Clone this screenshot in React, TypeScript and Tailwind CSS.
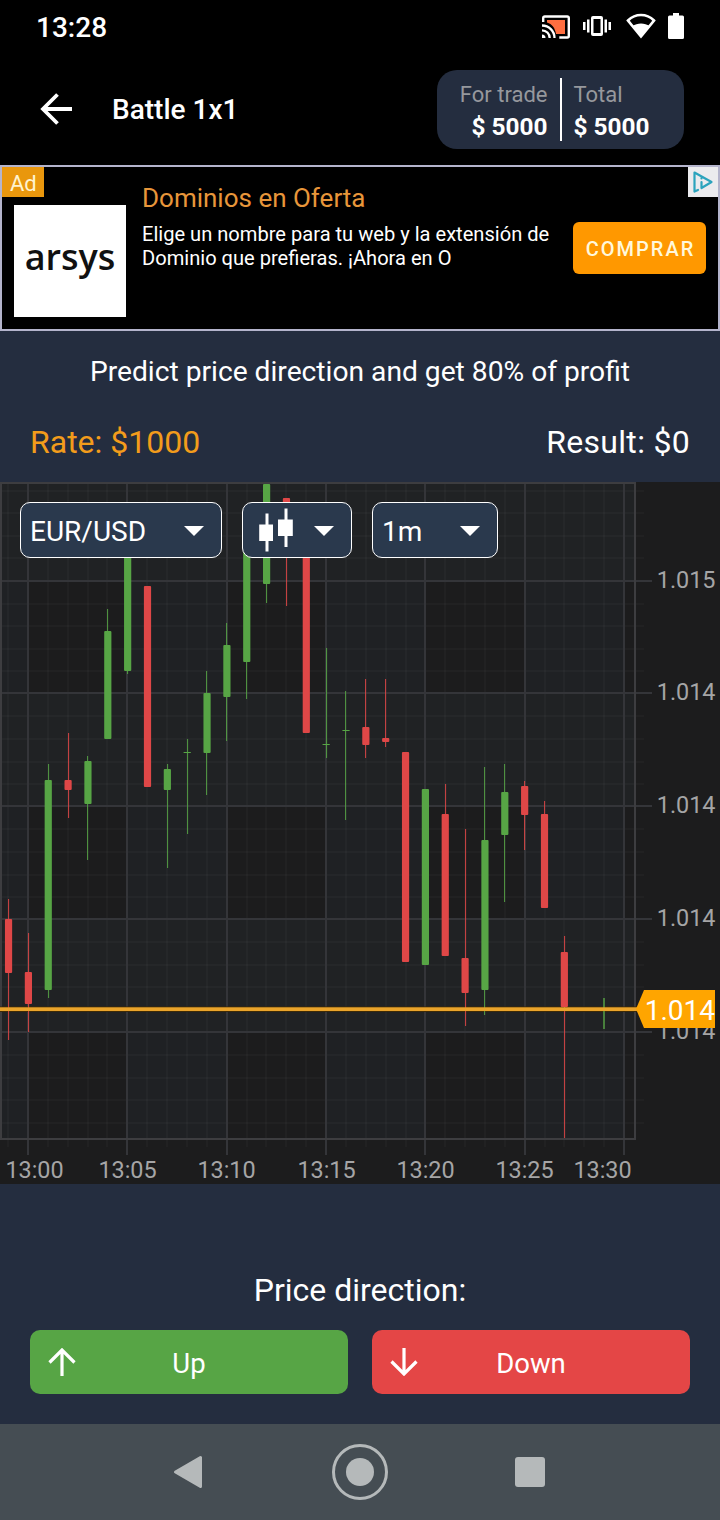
import React from 'react';

interface Candle {
  // minutes since 13:00
  t: number;
  up: boolean;
  high: number;
  top: number;
  bottom: number;
  low: number;
}

const GREEN = '#57a545';
const RED = '#df4747';

const X0 = 28;
const STEP = 19.87;
const PLOT_RIGHT = 635;
const PLOT_BOTTOM = 657;

const CANDLES: Candle[] = [
  { t: -1, up: false, high: 417, top: 437, bottom: 491, low: 558 },
  { t: 0, up: false, high: 451, top: 490, bottom: 522, low: 550 },
  { t: 1, up: true, high: 282, top: 298, bottom: 508, low: 516 },
  { t: 2, up: false, high: 251, top: 298, bottom: 308, low: 336 },
  { t: 3, up: true, high: 274, top: 279, bottom: 322, low: 378 },
  { t: 4, up: true, high: 127, top: 149, bottom: 257, low: 257 },
  { t: 5, up: true, high: 60, top: 60, bottom: 189, low: 192 },
  { t: 6, up: false, high: 104, top: 104, bottom: 305, low: 305 },
  { t: 7, up: true, high: 282, top: 287, bottom: 308, low: 386 },
  { t: 8, up: true, high: 257, top: 270, bottom: 271, low: 352 },
  { t: 9, up: true, high: 189, top: 211, bottom: 271, low: 313 },
  { t: 10, up: true, high: 141, top: 163, bottom: 215, low: 259 },
  { t: 11, up: true, high: 50, top: 50, bottom: 180, low: 217 },
  { t: 12, up: true, high: 2, top: 2, bottom: 102, low: 121 },
  { t: 13, up: false, high: 16, top: 16, bottom: 60, low: 124 },
  { t: 14, up: false, high: 50, top: 50, bottom: 251, low: 251 },
  { t: 15, up: true, high: 166, top: 262, bottom: 263, low: 276 },
  { t: 16, up: true, high: 209, top: 248, bottom: 249, low: 338 },
  { t: 17, up: false, high: 197, top: 245, bottom: 263, low: 276 },
  { t: 18, up: false, high: 197, top: 256, bottom: 260, low: 265 },
  { t: 19, up: false, high: 270, top: 270, bottom: 480, low: 480 },
  { t: 20, up: true, high: 307, top: 307, bottom: 483, low: 483 },
  { t: 21, up: false, high: 302, top: 332, bottom: 474, low: 474 },
  { t: 22, up: false, high: 347, top: 476, bottom: 511, low: 544 },
  { t: 23, up: true, high: 285, top: 358, bottom: 508, low: 533 },
  { t: 24, up: true, high: 282, top: 310, bottom: 353, low: 420 },
  { t: 25, up: false, high: 299, top: 304, bottom: 333, low: 368 },
  { t: 26, up: false, high: 319, top: 332, bottom: 426, low: 426 },
  { t: 27, up: false, high: 454, top: 470, bottom: 525, low: 656 },
];

const TIME_LABELS = [
  { x: 34.5, text: '13:00' },
  { x: 127.5, text: '13:05' },
  { x: 226.5, text: '13:10' },
  { x: 326.5, text: '13:15' },
  { x: 425.5, text: '13:20' },
  { x: 524.5, text: '13:25' },
  { x: 602.5, text: '13:30' },
];

const PRICE_LABELS = [
  { y: 99, text: '1.015' },
  { y: 211, text: '1.014' },
  { y: 324, text: '1.014' },
  { y: 437, text: '1.014' },
  { y: 550, text: '1.014' },
];

const xAt = (t: number) => Math.round(X0 + t * STEP);
const yAt = (n: number) => Math.round(99 + n * 22.58);
const candleX = (t: number) => 28.3 + t * 19.85;

const Grid: React.FC = () => {
  const columns = Array.from({ length: 32 }, (_, i) => i - 1);
  const rows = Array.from({ length: 29 }, (_, i) => i - 4);
  const minorColumns = columns.filter(t => t % 5 !== 0);
  const minorRows = rows.filter(n => n % 5 !== 0);

  return (
    <g>
      <rect width="720" height="702" fill="#1c1c1d" />
      {/* Alternating bands */}
      {[[1, 28], [128, 227], [326, 425], [525, 624]].map(([a, b]) => (
        <rect key={a} x={a} y="1" width={b - a} height="656" fill="#1f2124" />
      ))}
      {[[1, 99], [211, 324], [437, 550]].map(([a, b]) => (
        <rect key={a} x="1" y={a} width="634" height={b - a} fill="#202224" />
      ))}
      {minorColumns.map(t => (
        <rect key={t} x={xAt(t) - 1} y="1" width="2" height="664" fill="#ffffff" fillOpacity="0.025" />
      ))}
      {minorRows.map(n => (
        <rect key={n} x="1" y={yAt(n) - 1} width="643" height="2" fill="#ffffff" fillOpacity="0.025" />
      ))}
      {[0, 5, 10, 15, 20, 25, 30].map(t => (
        <rect key={t} x={xAt(t) - 1} y="1" width="2" height="672" fill="#343539" />
      ))}
      {PRICE_LABELS.map(({ y }) => (
        <rect key={y} x="1" y={y - 1} width="651" height="2" fill="#343539" />
      ))}
      <rect x="1" y="1" width={PLOT_RIGHT - 1} height={PLOT_BOTTOM - 1} fill="none" stroke="#3d3d40" strokeWidth="2" />
    </g>
  );
};

const Chart: React.FC = () => (
  <svg width="720" height="702" viewBox="0 0 720 702" className="block" fontFamily="Roboto, sans-serif">
    <Grid />

    {/* Dark edge of the price line sits below the candles */}
    <rect y="524.5" width="637" height="5.5" fill="#3c2a08" />

    {CANDLES.map(({ t, up, high, top, bottom, low }) => (
      <g key={t} fill={up ? GREEN : RED}>
        <rect x={Math.round(candleX(t) - 0.5)} y={high} width="1.1" height={low - high} fillOpacity="0.85" />
        <rect
          x={candleX(t) - 3.5}
          y={top}
          width="7.2"
          height={bottom - top}
          rx={bottom - top > 3 ? 1 : 0}
        />
      </g>
    ))}
    <rect x="603" y="516" width="2" height="31" fill={GREEN} fillOpacity="0.7" />
    <rect y="525.3" width="637" height="3.7" fill="#eaa42b" />

    <g fill="#a5a5a6" fontSize="23.4" textAnchor="middle">
      {TIME_LABELS.map(({ x, text }) => (
        <text key={text} x={x} y="696">{text}</text>
      ))}
    </g>
    <g fill="#a5a5a6" fontSize="23.4" textAnchor="end">
      {PRICE_LABELS.map(({ y, text }) => (
        <text key={y} x="715.5" y={y + 7.3}>{text}</text>
      ))}
    </g>

    {/* Current price tag */}
    <path d="M636 527 L644 508 H715 V546 H644 Z" fill="#ffa500" />
    <text x="715" y="538" fontSize="28" fill="#fff" textAnchor="end">1.014</text>
  </svg>
);

const Caret: React.FC = () => (
  <svg width="20" height="10" viewBox="0 0 20 10" fill="#fff" className="mt-px">
    <path d="M0 0h20L10 10z" />
  </svg>
);

const CandleIcon: React.FC = () => (
  <svg width="36" height="44" viewBox="0 0 36 44" fill="#fff">
    <path d="M6.500 5.500h3V16.500H14V33H9.500V43.500h-3V33H.2V16.500h6.300z" />
    <path d="M25.500 .5h3V11.500h5.300v16.500H28.500V39h-3V28H19V11.500h6.500z" />
  </svg>
);

const StatusBar: React.FC = () => (
  <div className="flex h-[54px] items-center justify-between pl-9 pr-9">
    <span className="mt-0.5 text-[28px] leading-8 font-medium">13:28</span>
    <div className="flex items-center">
      <svg width="28" height="24" viewBox="0 0 28 24" fill="none">
        <path d="M5 5h18v14h-9C13 13 10 9 5 7.500z" fill="#ff6e40" />
        <path d="M1.200 7V3a1.500 1.500 0 0 1 1.500-1.500h22.600A1.500 1.500 0 0 1 26.800 3v18a1.500 1.500 0 0 1-1.500 1.500h-8" stroke="#fff" strokeWidth="2.400" />
        <path d="M0 10.500a12.500 12.500 0 0 1 12.500 12.500M0 15.300a7.700 7.700 0 0 1 7.700 7.700" stroke="#fff" strokeWidth="2.300" />
        <path d="M0 19.500a3.500 3.500 0 0 1 3.500 3.500H0z" fill="#fff" />
      </svg>
      <svg width="28" height="20" viewBox="0 0 28 20" className="mb-0.5 ml-[13px]" fill="#fff">
        <path d="M0 6h2.500v8H0zM4 3.500h2.500v13H4zM21.500 3.500H24v13h-2.500zM25.500 6H28v8h-2.500z" />
        <path fillRule="evenodd" d="M10 0h8a2 2 0 0 1 2 2v16a2 2 0 0 1-2 2h-8a2 2 0 0 1-2-2V2a2 2 0 0 1 2-2zm.5 3v14h7V3z" />
      </svg>
      <svg width="30" height="26" viewBox="0 0 30 26" className="mb-0.5 ml-[15px]">
        <path d="M2 7.500C9.500 .2 20.500 .2 28 7.500L15 23.500z" fill="none" stroke="#fff" strokeWidth="2.600" />
        <path d="M6.500 13C11 9.500 19 9.500 23.500 13L15 24z" fill="#fff" />
      </svg>
      <svg width="16" height="26" viewBox="0 0 16 26" className="mb-0.5 ml-3" fill="#fff">
        <path d="M5 0h6v2.500h3.500A1.500 1.500 0 0 1 16 4v20.500a1.500 1.500 0 0 1-1.500 1.500h-13A1.500 1.500 0 0 1 0 24.500V4a1.500 1.500 0 0 1 1.500-1.500H5z" />
      </svg>
    </div>
  </div>
);

const Header: React.FC = () => (
  <header className="flex h-[111px] items-center pb-px pl-10 pr-9">
    <svg width="32" height="32" viewBox="0 0 32 32" fill="none" stroke="#fff" strokeWidth="3.800">
      <path d="M32 16H3M17.500 1.500L3 16l14.500 14.500" />
    </svg>
    <h1 className="mt-px ml-10 text-[28px] leading-8 font-medium">Battle 1x1</h1>
    <div className="ml-auto flex h-[79px] w-[247px] justify-center rounded-[20px] bg-[#242d3f] py-2">
      <div className="w-[110px] pt-px text-right text-[22px] leading-[32px]">
        <p className="text-[#96989d]">For trade</p>
        <p className="text-[24.4px] leading-[31px] font-bold">$ 5000</p>
      </div>
      <div className="mx-3 w-0.5 bg-white" />
      <div className="w-[110px] pt-px text-[22px] leading-[32px]">
        <p className="text-[#96989d]">Total</p>
        <p className="text-[24.4px] leading-[31px] font-bold">$ 5000</p>
      </div>
    </div>
  </header>
);

const AdBanner: React.FC = () => (
  <section className="relative flex h-[166px] border-2 border-[#b4b4cc] pl-3">
    <div className="mt-[38px] flex h-28 w-28 items-center justify-center bg-white pb-[9px]">
      <span className="font-['Open_Sans',sans-serif] text-[36px] leading-10 font-semibold text-[#111]">arsys</span>
    </div>
    <div className="ml-4 w-[431px] pt-[15px]">
      <h2 className="text-[26px] leading-8 text-[#e8963a]">Dominios en Oferta</h2>
      <p className="mt-2 text-[20.1px] leading-6 whitespace-nowrap">
        Elige un nombre para tu web y la extensión de
        <br />
        Dominio que prefieras. ¡Ahora en O
      </p>
    </div>
    <button className="mt-[55px] h-[52px] w-[133px] rounded-md bg-[#ff9800] pt-0.5 pl-0.5 text-[20px] font-medium tracking-[2px] text-[#fff8dc]">
      COMPRAR
    </button>
    <span className="absolute top-0 left-0 h-[30px] w-[42px] bg-[#e9970d] pl-2 text-[22px] leading-[33px] text-[#fff3d0]">Ad</span>
    <div className="absolute top-0 right-0 flex h-[30px] w-[30px] items-center justify-center bg-[#ebebee]">
      <svg width="20" height="22" viewBox="0 0 20 22" fill="none" stroke="#2ba3bd" strokeWidth="2.200" strokeLinecap="round" strokeLinejoin="round">
        <path d="M5 19L1.500 20.500V1.500L18.500 11 8.500 17V11" />
        <path d="M8.500 7.200v.2" />
      </svg>
    </div>
  </section>
);

const SELECT = 'flex h-14 items-center rounded-[10px] border border-white bg-[#2a394d] text-[28px]';

const App: React.FC = () => {
  return (
    <div className="flex h-[1520px] w-[720px] flex-col bg-black font-['Roboto',sans-serif] text-white">
      <StatusBar />
      <Header />
      <AdBanner />

      <main className="flex h-[1093px] flex-col bg-[#242d3f]">
        <p className="pt-[25px] text-center text-[28.2px] leading-8">Predict price direction and get 80% of profit</p>
        <div className="flex justify-between px-[30px] pt-[34px] text-[32px] leading-10">
          <span className="text-[#f39c1b]">Rate: $1000</span>
          <span className="tracking-[0.3px]">Result: $0</span>
        </div>

        <div className="relative mt-5 h-[702px]">
          <Chart />
          {/* Chart controls float over the plot */}
          <div className="absolute top-5 left-5 flex gap-5">
            <div className={`${SELECT} w-[202px] justify-between pl-[9px] pr-[17px]`}>
              <span className="pt-[3px]">EUR/USD</span>
              <Caret />
            </div>
            <div className={`${SELECT} w-[110px] justify-between pl-4 pr-[17px]`}>
              <CandleIcon />
              <Caret />
            </div>
            <div className={`${SELECT} w-[126px] justify-between pl-[9px] pr-[17px]`}>
              <span className="pt-[3px]">1m</span>
              <Caret />
            </div>
          </div>
        </div>

        <h3 className="mt-[86px] text-center text-[32px] leading-10">Price direction:</h3>
        <div className="mt-5 flex gap-6 px-[30px]">
          <button className="relative h-16 flex-1 rounded-[10px] bg-[#57a545] pt-[3px] text-[27.5px]">
            <svg width="28" height="28" viewBox="0 0 28 28" className="absolute top-[18px] left-[18px]" fill="none" stroke="#fff" strokeWidth="3.200">
              <path d="M14 28V3M1.500 14.500L14 2l12.500 12.500" />
            </svg>
            Up
          </button>
          <button className="relative h-16 flex-1 rounded-[10px] bg-[#e44646] pt-[3px] text-[27.5px]">
            <svg width="28" height="28" viewBox="0 0 28 28" className="absolute top-[18px] left-[18px]" fill="none" stroke="#fff" strokeWidth="3.200">
              <path d="M14 0v25M1.500 13.500L14 26l12.500-12.500" />
            </svg>
            Down
          </button>
        </div>
      </main>

      {/* System navigation */}
      <nav className="flex h-24 items-center justify-center bg-[#454d53]">
        <svg width="30" height="34" viewBox="0 0 30 34" fill="#b5b9ba" stroke="#b5b9ba" strokeWidth="3" strokeLinejoin="round">
          <path d="M2.500 17L27.500 2.500v29z" />
        </svg>
        <svg width="56" height="56" viewBox="0 0 56 56" className="mr-[127px] ml-[129px]">
          <circle cx="28" cy="28" r="26.500" fill="none" stroke="#b5b9ba" strokeWidth="3" />
          <circle cx="28" cy="28" r="14" fill="#b5b9ba" />
        </svg>
        <div className="mr-0.5 h-[30px] w-[30px] rounded-[3px] bg-[#b5b9ba]" />
      </nav>
    </div>
  );
};

export default App;
